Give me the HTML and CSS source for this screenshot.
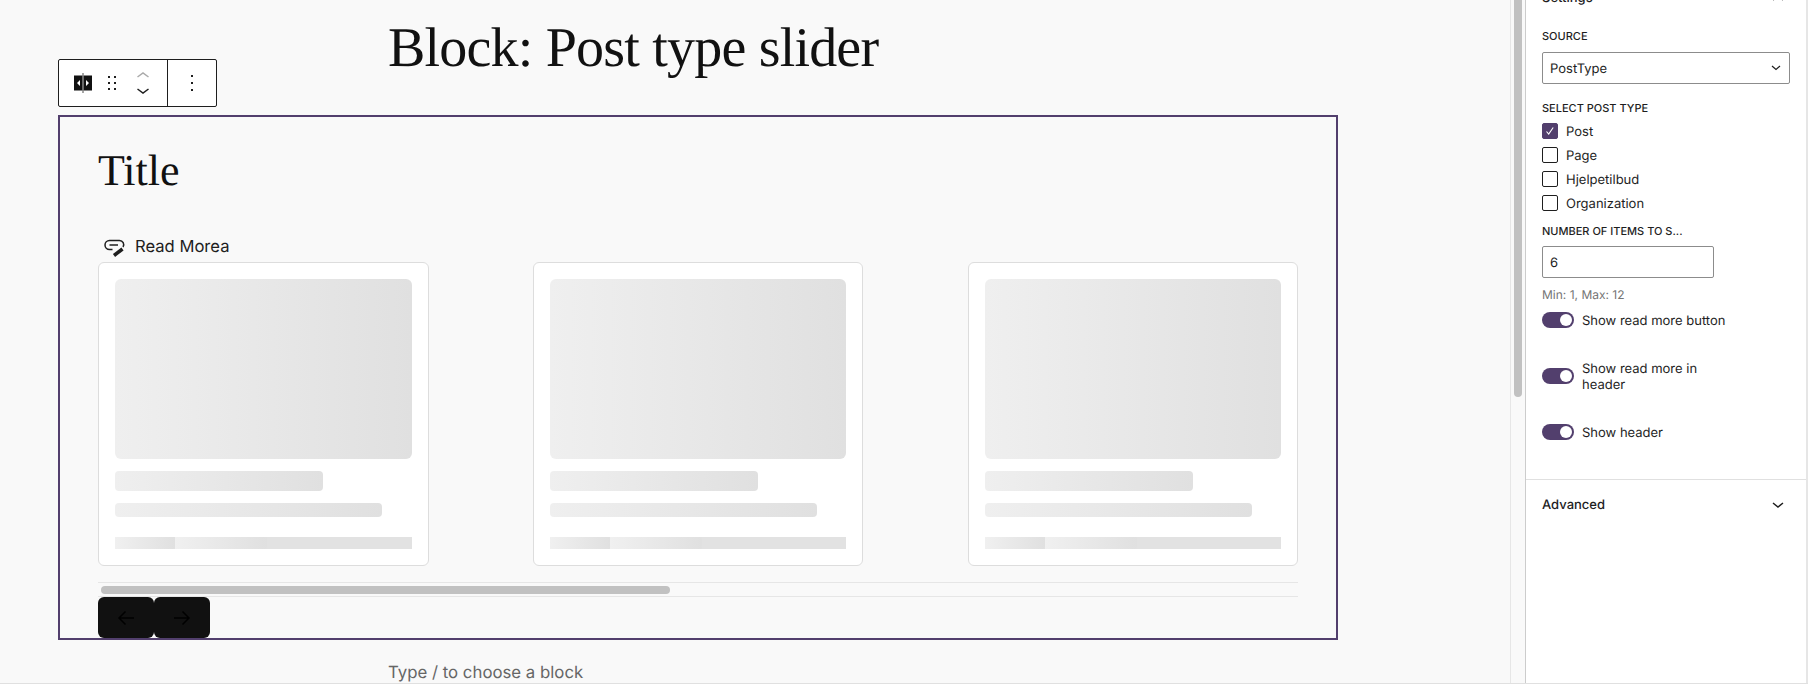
FILE: index.html
```html
<!DOCTYPE html>
<html lang="en">
<head>
    <meta charset="UTF-8">
    <title>Block: Post type slider</title>
    <link rel="stylesheet" href="styles.css">
</head>
<body>
    <div class="editor">
        <main class="canvas">
            <div class="canvas-scroll">
                <h1 class="post-title">Block: Post type slider</h1>

                <div class="block-toolbar">
                    <div class="toolbar-group">
                        <svg class="tool-block" width="22" height="22" viewBox="0 0 22 22">
                            <rect x="2" y="3.500" width="18" height="15" fill="#111"/>
                            <rect x="10.250" y="1" width="1.500" height="20" fill="#888"/>
                            <path d="M8 8v6l-3-3z M14 8v6l3-3z" fill="#fff"/>
                        </svg>
                        <svg class="tool-drag" width="12" height="16" viewBox="0 0 12 16">
                            <path d="M2 1h2v2H2z M8 1h2v2H8z M2 7h2v2H2z M8 7h2v2H8z M2 13h2v2H2z M8 13h2v2H8z" fill="#1e1e1e"/>
                        </svg>
                        <div class="tool-mover">
                            <svg width="16" height="8" viewBox="0 0 16 8"><path d="M2.500 6L8 2l5.500 4" fill="none" stroke="#aaa" stroke-width="1.500"/></svg>
                            <svg width="16" height="8" viewBox="0 0 16 8"><path d="M2.500 2L8 6l5.500-4" fill="none" stroke="#1e1e1e" stroke-width="1.500"/></svg>
                        </div>
                    </div>
                    <div class="toolbar-more">
                        <svg width="4" height="18" viewBox="0 0 4 18">
                            <path d="M1 1h2v2H1z M1 8h2v2H1z M1 15h2v2H1z" fill="#1e1e1e"/>
                        </svg>
                    </div>
                </div>

                <section class="slider-block">
                    <h2 class="slider-title">Title</h2>
                    <div class="read-more">
                        <svg width="24" height="22" viewBox="0 0 24 22">
                            <path d="M10.500 14.500H7.500a4.500 4.500 0 0 1 0-9h10a4.200 4.200 0 0 1 3.500 6.500" fill="none" stroke="#1e1e1e" stroke-width="1.500"/>
                            <path d="M7.500 10h8.500" fill="none" stroke="#1e1e1e" stroke-width="1.500"/>
                            <path d="M12 20.500l8.500-6.500" fill="none" stroke="#1e1e1e" stroke-width="3.500"/>
                        </svg>
                        <span class="nudge">Read Morea</span>
                    </div>

                    <div class="cards">
                        <div class="card">
                            <div class="skeleton skeleton-image"></div>
                            <div class="skeleton skeleton-title"></div>
                            <div class="skeleton skeleton-line"></div>
                            <div class="skeleton-meta"><span></span><span></span></div>
                        </div>
                        <div class="card">
                            <div class="skeleton skeleton-image"></div>
                            <div class="skeleton skeleton-title"></div>
                            <div class="skeleton skeleton-line"></div>
                            <div class="skeleton-meta"><span></span><span></span></div>
                        </div>
                        <div class="card">
                            <div class="skeleton skeleton-image"></div>
                            <div class="skeleton skeleton-title"></div>
                            <div class="skeleton skeleton-line"></div>
                            <div class="skeleton-meta"><span></span><span></span></div>
                        </div>
                    </div>

                    <div class="slider-scrollbar"><div class="slider-thumb"></div></div>

                    <div class="slider-nav">
                        <button class="nav-button" type="button">
                            <svg width="24" height="24" viewBox="0 0 24 24"><path d="M20 12H5 M11.500 5.500L5 12l6.500 6.500" fill="none" stroke="#000" stroke-width="1.500"/></svg>
                        </button>
                        <button class="nav-button" type="button">
                            <svg width="24" height="24" viewBox="0 0 24 24"><path d="M4 12h15 M12.500 5.500L19 12l-6.500 6.500" fill="none" stroke="#000" stroke-width="1.500"/></svg>
                        </button>
                    </div>
                </section>

                <p class="appender">Type / to choose a block</p>
            </div>
            <div class="canvas-scrollbar"><div class="canvas-thumb"></div></div>
        </main>

        <aside class="sidebar">
            <div class="panel">
                <div class="panel-head">
                    <span class="settings-title">Settings</span>
                    <svg width="14" height="8" viewBox="0 0 14 8"><path d="M2 6l5-4 5 4" fill="none" stroke="#1e1e1e" stroke-width="1.500"/></svg>
                </div>

                <label class="field-label">Source</label>
                <div class="select-box">
                    <span class="nudge">PostType</span>
                    <svg width="10" height="6" viewBox="0 0 10 6"><path d="M1 1l4 3.500L9 1" fill="none" stroke="#1e1e1e" stroke-width="1.200"/></svg>
                </div>

                <label class="field-label label-types">Select post type</label>
                <div class="checks">
                    <div class="check-row">
                        <span class="check is-on">
                            <svg width="16" height="16" viewBox="0 0 16 16"><path d="M4.500 8.500l2.200 2.500 4.500-6.500" fill="none" stroke="#fff" stroke-width="1.100"/></svg>
                        </span>
                        <span class="nudge">Post</span>
                    </div>
                    <div class="check-row"><span class="check"></span><span class="nudge">Page</span></div>
                    <div class="check-row"><span class="check"></span><span class="nudge">Hjelpetilbud</span></div>
                    <div class="check-row"><span class="check"></span><span class="nudge">Organization</span></div>
                </div>

                <label class="field-label label-number">Number of items to s...</label>
                <div class="number-box"><span class="nudge">6</span></div>
                <p class="field-help">Min: 1, Max: 12</p>

                <div class="toggle-row row-first"><span class="toggle"></span><span class="nudge">Show read more button</span></div>
                <div class="toggle-row row-second"><span class="toggle"></span><span class="toggle-text nudge">Show read more in header</span></div>
                <div class="toggle-row row-third"><span class="toggle"></span><span class="nudge">Show header</span></div>
            </div>

            <div class="panel-closed">
                <span>Advanced</span>
                <svg width="14" height="8" viewBox="0 0 14 8"><path d="M2 2l5 4 5-4" fill="none" stroke="#1e1e1e" stroke-width="1.500"/></svg>
            </div>
        </aside>
    </div>
    <div class="status-line"></div>
</body>
</html>
```

FILE: styles.css
```css
* {
    box-sizing: border-box;
}

html, body {
    height: 100%;
}

body {
    margin: 0;
    background-color: #fff;
    color: #1e1e1e;
    font-family: Inter, "Liberation Sans", sans-serif;
    text-rendering: geometricPrecision;
    overflow: hidden;
}

.editor {
    display: flex;
    height: 683px;
    overflow: hidden;
}

/* Canvas */
.canvas {
    flex: 1;
    display: flex;
    min-width: 0;
    background-color: #f9f9f9;
}

.canvas-scroll {
    position: relative;
    flex: 1;
    padding-left: 58px;
    border-right: 1px solid #e6e6e6;
}

.post-title {
    margin: 0;
    height: 115px;
    padding: 14px 0 0 330px;
    font-family: "Liberation Serif", serif;
    font-size: 56px;
    font-weight: 400;
    line-height: 68px;
    letter-spacing: -0.8px;
    color: #111;
}

.block-toolbar {
    position: absolute;
    left: 58px;
    top: 59px;
    display: flex;
    width: 159px;
    height: 48px;
    background-color: #fff;
    border: 1px solid #1e1e1e;
    border-radius: 2px;
}

.toolbar-group {
    display: flex;
    align-items: center;
    width: 109px;
    padding-left: 13px;
    border-right: 1px solid #1e1e1e;
}

.tool-drag {
    margin-left: 12px;
}

.tool-mover {
    display: flex;
    flex-direction: column;
    gap: 8px;
    margin-left: 17px;
}

.tool-mover svg {
    display: block;
}

.toolbar-more {
    flex: 1;
    display: flex;
    align-items: center;
    justify-content: center;
}

/* Slider block */
.slider-block {
    width: 1280px;
    height: 525px;
    padding: 0 38px;
    border: 2px solid #523f6d;
}

.slider-title {
    margin: 0;
    padding-top: 27px;
    font-family: "Liberation Serif", serif;
    font-size: 44px;
    font-weight: 400;
    line-height: 54px;
    color: #111;
}

.read-more {
    display: flex;
    align-items: center;
    gap: 9px;
    height: 24px;
    margin-top: 36px;
    padding-left: 4px;
    font-size: 16.6px;
    color: #1e1e1e;
}

.cards {
    display: flex;
    justify-content: space-between;
    margin-top: 4px;
}

.card {
    width: 330.5px;
    height: 304px;
    padding: 16px;
    background-color: #fff;
    border: 1px solid #ddd;
    border-radius: 6px;
}

.skeleton {
    background: linear-gradient(90deg, #efefef, #e0e0e0);
    border-radius: 4px;
}

.skeleton-image {
    height: 180px;
    border-radius: 6px;
}

.skeleton-title {
    width: 208px;
    height: 20px;
    margin-top: 12px;
}

.skeleton-line {
    width: 267px;
    height: 14px;
    margin-top: 12px;
}

.skeleton-meta {
    display: flex;
    height: 12px;
    margin-top: 20px;
    background-color: #e2e2e2;
}

.skeleton-meta span {
    background: linear-gradient(90deg, #f0f0f0, #e0e0e0);
    border-radius: 0 2px 2px 0;
}

.skeleton-meta span:first-child {
    width: 60px;
}

.skeleton-meta span:last-child {
    width: 92px;
}

.slider-scrollbar {
    height: 15px;
    margin-top: 16px;
    padding-top: 3px;
    border-top: 1px solid #e6e6e6;
    border-bottom: 1px solid #e6e6e6;
}

.slider-thumb {
    width: 569px;
    height: 8px;
    margin-left: 3px;
    background-color: #c1c1c1;
    border-radius: 4px;
}

.slider-nav {
    display: flex;
}

.nav-button {
    display: flex;
    align-items: center;
    justify-content: center;
    width: 56px;
    height: 41px;
    padding: 0;
    background-color: #111;
    border: none;
    border-radius: 6px;
}

.appender {
    margin: 21px 0 0 330px;
    font-size: 16.8px;
    line-height: 24px;
    color: #666;
}

.canvas-scrollbar {
    width: 14px;
    padding-left: 3px;
}

.canvas-thumb {
    width: 8px;
    height: 397px;
    background-color: #c1c1c1;
    border-radius: 0 0 4px 4px;
}

/* Sidebar */
.sidebar {
    width: 283px;
    background-color: #fff;
    border-left: 1px solid #ccc;
    border-right: 2px solid #e6e6e6;
}

.panel {
    height: 491px;
    padding: 0 16px;
    border-bottom: 1px solid #e0e0e0;
}

.panel-head {
    display: flex;
    align-items: center;
    justify-content: space-between;
    height: 18px;
    margin-top: -11px;
    padding-right: 5px;
    font-size: 13px;
    font-weight: 500;
}

.field-label {
    display: block;
    font-size: 11px;
    font-weight: 500;
    line-height: 14px;
    text-transform: uppercase;
}

.panel-head + .field-label {
    margin-top: 22px;
}

/* texto 1px mais baixo sem mexer no resto da linha */
.nudge {
    padding-top: 1px;
    margin-bottom: -1px;
}

.select-box {
    display: flex;
    align-items: center;
    justify-content: space-between;
    width: 248px;
    height: 32px;
    margin-top: 9px;
    padding: 0 8px 0 7px;
    font-size: 13px;
    border: 1px solid #8c8c8c;
    border-radius: 2px;
}

.label-types {
    margin-top: 17px;
}

.checks {
    display: flex;
    flex-direction: column;
    gap: 8px;
    margin-top: 8px;
}

.check-row {
    display: flex;
    align-items: flex-start;
    gap: 8px;
    height: 16px;
    font-size: 13px;
    line-height: 16px;
    color: #1e1e1e;
}

.check {
    width: 16px;
    height: 16px;
    border: 1px solid #1e1e1e;
    border-radius: 2px;
}

.check svg {
    display: block;
    margin: -1px;
}

.check.is-on {
    background-color: #523f6d;
    border-color: #523f6d;
}

.label-number {
    margin-top: 13px;
}

.number-box {
    display: flex;
    align-items: center;
    width: 172px;
    height: 32px;
    margin-top: 8px;
    padding: 0 7px;
    font-size: 13px;
    border: 1px solid #8c8c8c;
    border-radius: 2px;
}

.field-help {
    margin: 9px 0 0;
    font-size: 12px;
    line-height: 16px;
    color: #757575;
}

.toggle-row {
    display: flex;
    align-items: center;
    gap: 8px;
    font-size: 13px;
    line-height: 16px;
}

.row-first {
    margin-top: 9px;
}

.row-second {
    margin-top: 32px;
}

.row-third {
    margin-top: 32px;
}

.toggle-text {
    width: 150px;
}

.toggle {
    position: relative;
    flex: none;
    width: 32px;
    height: 16px;
    background-color: #523f6d;
    border-radius: 8px;
}

.toggle::after {
    content: "";
    position: absolute;
    top: 2px;
    right: 2px;
    width: 12px;
    height: 12px;
    background-color: #fff;
    border-radius: 50%;
}

.panel-closed {
    display: flex;
    align-items: center;
    justify-content: space-between;
    height: 50px;
    padding: 0 21px 0 16px;
    font-size: 13px;
    font-weight: 500;
}

.status-line {
    height: 6px;
    background-color: #fff;
    border-top: 1px solid #e0e0e0;
}
```
